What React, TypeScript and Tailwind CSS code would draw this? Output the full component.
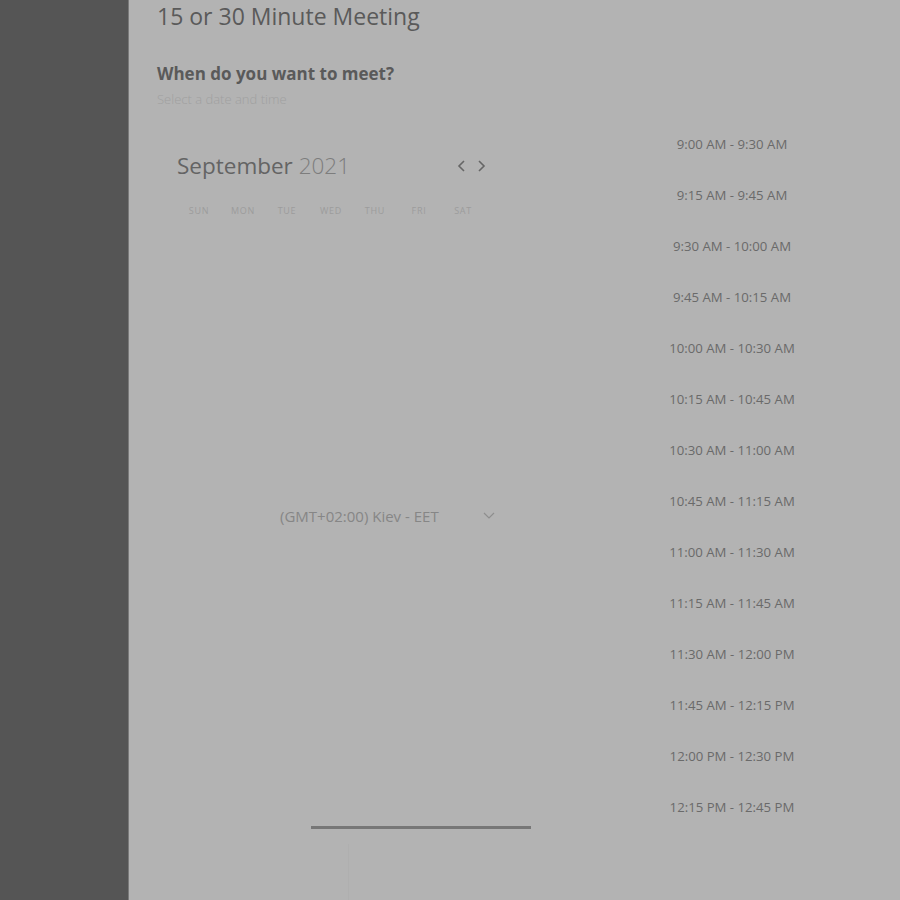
import React from 'react'

const days = ['Sun', 'Mon', 'Tue', 'Wed', 'Thu', 'Fri', 'Sat']

const slots = [
  '9:00 AM - 9:30 AM',
  '9:15 AM - 9:45 AM',
  '9:30 AM - 10:00 AM',
  '9:45 AM - 10:15 AM',
  '10:00 AM - 10:30 AM',
  '10:15 AM - 10:45 AM',
  '10:30 AM - 11:00 AM',
  '10:45 AM - 11:15 AM',
  '11:00 AM - 11:30 AM',
  '11:15 AM - 11:45 AM',
  '11:30 AM - 12:00 PM',
  '11:45 AM - 12:15 PM',
  '12:00 PM - 12:30 PM',
  '12:15 PM - 12:45 PM',
]

function Chevron({ dir }: { dir: 'left' | 'right' | 'down' }) {
  const d = dir === 'left' ? 'M7 1 L2 6 L7 11' : dir === 'right' ? 'M2 1 L7 6 L2 11' : 'M1 3 L6 8 L11 3'
  return (
    <svg width={dir === 'down' ? 12 : 9} height={12} viewBox={dir === 'down' ? '0 0 12 12' : '0 0 9 12'} fill="none">
      <path d={d} stroke="currentColor" strokeWidth={dir === 'down' ? 1.2 : 1.6} />
    </svg>
  )
}

export default function App() {
  return (
    <div className="flex h-[900px] w-[900px] overflow-hidden font-['Open_Sans',sans-serif]">
      {/* sidebar */}
      <div className="w-[129px] shrink-0 bg-[#555555] border-r border-[#7a7a7a]" />

      <div className="flex-1 bg-[#b3b3b3] pl-[28px]">
        <h1 className="text-[23px] leading-[32px] text-[#5a5a5a]">15 or 30 Minute Meeting</h1>

        <div className="flex">
          {/* left: calendar */}
          <div className="w-[374px] shrink-0">
            <h2 className="mt-[26px] text-[17px] leading-[32px] font-bold text-[#5a5a5a]">When do you want to meet?</h2>
            <p className="text-[13px] leading-[18px] font-light text-[#a0a0a0]">Select a date and time</p>

            <div className="mt-[41px] pl-[20px] flex items-center">
              <div className="text-[22.5px] leading-[34px] text-[#646464]">
                September <span className="font-light text-[#7d7d7d]">2021</span>
              </div>
              <div className="ml-auto mr-[45px] flex items-center gap-[11px] text-[#666666]">
                <Chevron dir="left" />
                <Chevron dir="right" />
              </div>
            </div>

            <div className="mt-[21px] pl-[20px] grid grid-cols-[repeat(7,44px)]">
              {days.map((d) => (
                <div key={d} className="text-center text-[9px] uppercase tracking-[0.08em] text-[#9c9c9c]">{d}</div>
              ))}
            </div>

            <div className="mt-[287px] flex items-center pl-[123px] pr-[36px]">
              <span className="text-[15px] leading-[22px] text-[#868686]">(GMT+02:00) Kiev - EET</span>
              <span className="ml-auto text-[#8e8e8e]"><Chevron dir="down" /></span>
            </div>

            <div className="mt-[299px] ml-[154px] w-[220px] h-[3px] bg-[#777777]" />
            <div className="mt-[15px] ml-[191px] w-px h-[60px] bg-[#afafaf]" />
          </div>

          {/* right: time slots */}
          <div className="ml-[120px] w-[162px] pt-[102px] flex flex-col">
            {slots.map((s) => (
              <div key={s} className="h-[51px] text-center text-[13.2px] leading-[20px] text-[#6a6a6a]">{s}</div>
            ))}
          </div>
        </div>
      </div>
    </div>
  )
}
